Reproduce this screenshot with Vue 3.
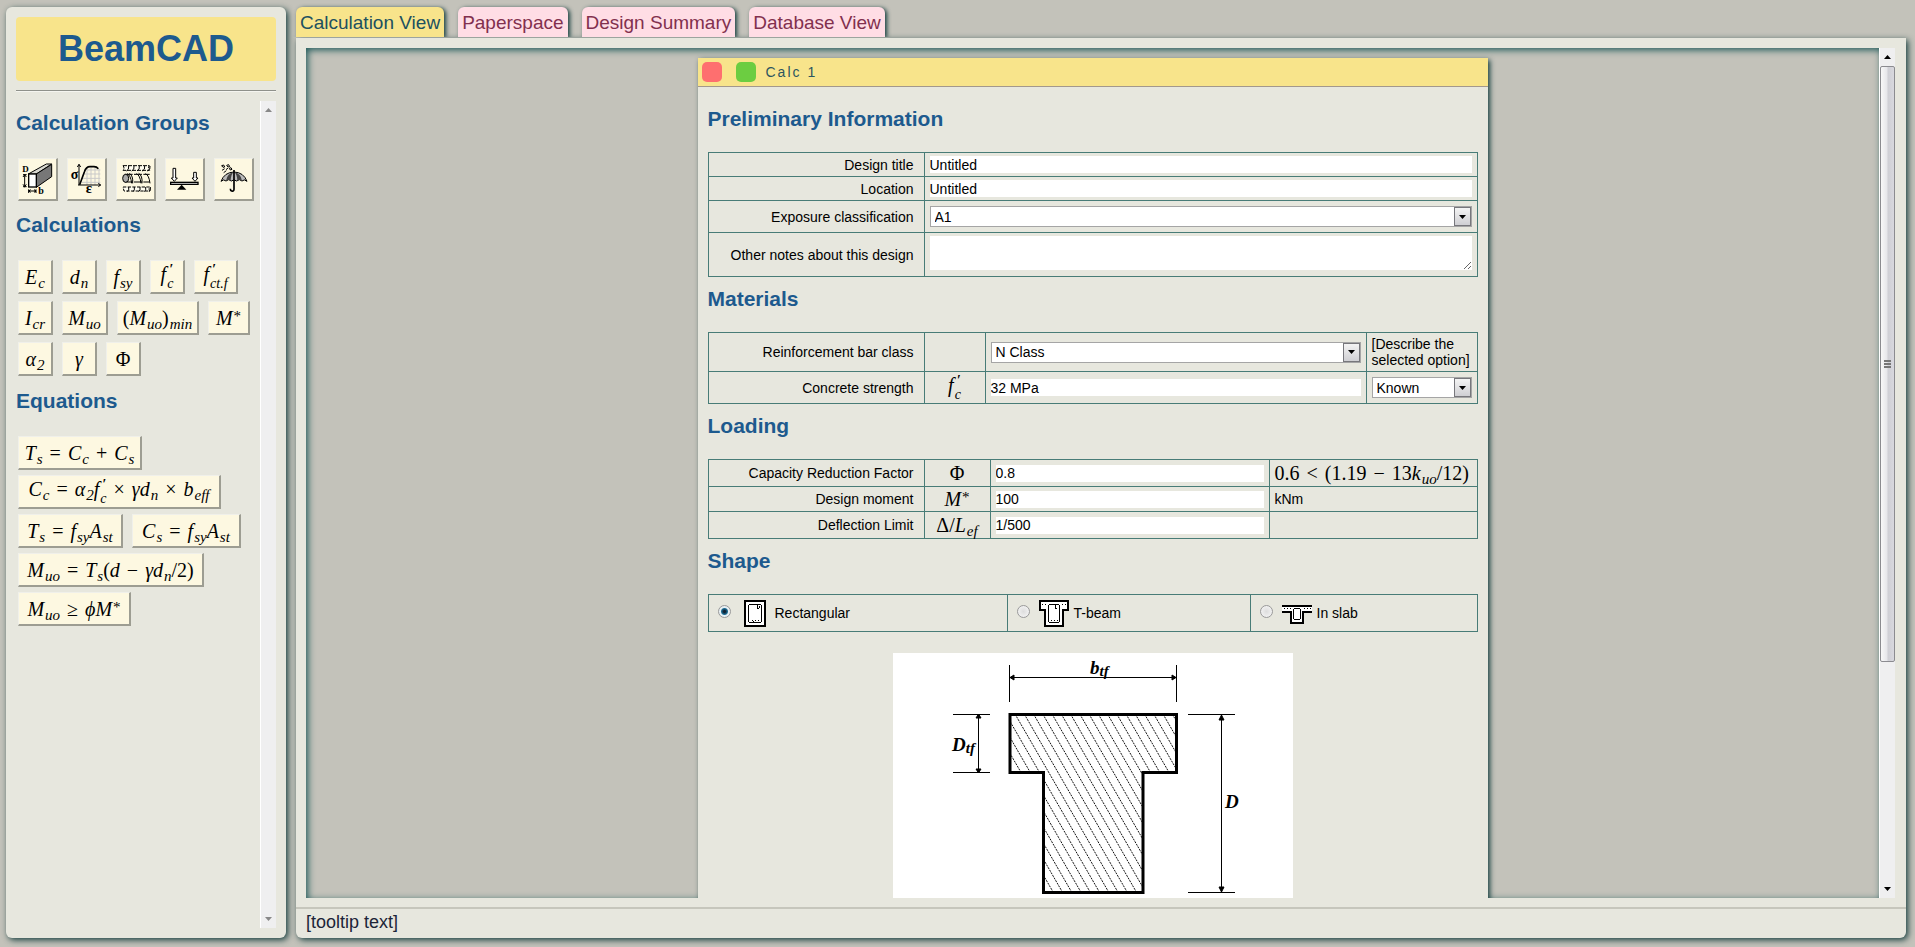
<script setup>
import { h, ref } from 'vue'

// Small formula renderer: letters are italic, _{} lowers, ^{} raises, |{a}{b} stacks.
const MathText = (props) => {
  const out = []
  const re = /\|\{([^}]*)\}\{([^}]*)\}|_\{([^}]*)\}|\^\{([^}]*)\}|\s([=+−×≥<])\s|([A-Za-zαγϕ]+)|([^A-Za-z_^|])/g
  for (const m of props.tex.matchAll(re)) {
    if (m[1] !== undefined) out.push(h('span', { class: 'm-stack' }, [h('span', m[1]), h('i', m[2])]))
    else if (m[3] !== undefined) out.push(h('sub', m[3]))
    else if (m[4] !== undefined) out.push(h('sup', m[4]))
    else if (m[5] !== undefined) out.push(h('span', { class: 'm-op' }, m[5]))
    else if (m[6] !== undefined) out.push(h('i', m[6]))
    else out.push(m[7])
  }
  return h('span', { class: 'm-text' }, out)
}
MathText.props = ['tex']

const groups = ['Section', 'Stress and strain', 'Reinforcement', 'Loads', 'Exposure']
const calculations = [
  { tex: 'E_{c}', w: 35 }, { tex: 'd_{n}', w: 35 }, { tex: 'f_{sy}', w: 35 },
  { tex: 'f|{′}{c}', w: 35 }, { tex: 'f|{′}{ct.f}', w: 44 },
  { tex: 'I_{cr}', w: 35 }, { tex: 'M_{uo}', w: 46 }, { tex: '(M_{uo})_{min}', w: 82 }, { tex: 'M^{*}', w: 42 },
  { tex: 'α_{2}', w: 35 }, { tex: 'γ', w: 35 }, { tex: 'Φ', w: 35 },
]
const equations = [
  { tex: 'T_{s} = C_{c} + C_{s}', w: 124 },
  { tex: 'C_{c} = α_{2}f|{′}{c} × γd_{n} × b_{eff}', w: 203 },
  { tex: 'T_{s} = f_{sy}A_{st}', w: 105 }, { tex: 'C_{s} = f_{sy}A_{st}', w: 109 },
  { tex: 'M_{uo} = T_{s}(d − γd_{n}/2)', w: 186 },
  { tex: 'M_{uo} ≥ ϕM^{*}', w: 113 },
]
const tabs = ['Calculation View', 'Paperspace', 'Design Summary', 'Database View']
const active = ref('Calculation View')
const shape = ref('rect')
const hatches = Array.from({ length: 31 }, (_, i) => 11 + i * 9.25)
</script>

<template>
  <div class="app">
    <aside class="sidebar">
      <h1>BeamCAD</h1>
      <hr>
      <div class="side-scroll">
        <div class="side-body">
          <h2>Calculation Groups</h2>
          <div class="btns">
            <button class="tool" :aria-label="groups[0]">
              <svg viewBox="60 478 108 117">
                <path d="M88 520 L142 490 H158 L112 520Z" fill="#d8d8d0" stroke="#000" stroke-width="3"/>
                <path d="M112 520 L158 491 V528 L112 560Z" fill="#777" stroke="#000" stroke-width="3"/>
                <rect x="89" y="520" width="23" height="39" fill="#fff" stroke="#000" stroke-width="4"/>
                <path d="M77 521V560M72 522H83M72 558H83M77 522l-5 7M77 522l5 7M77 558l-5-7M77 558l5-7M89 566v11M111 566v11M89 571H111M89 571l6-4M89 571l6 4M111 571l-6-4M111 571l-6 4" fill="none" stroke="#000" stroke-width="3"/>
                <text x="70" y="515" font-size="27" font-weight="bold">D</text>
                <text x="118" y="579" font-size="30" font-weight="bold">b</text>
              </svg>
            </button>
            <button class="tool" :aria-label="groups[1]">
              <svg viewBox="206 478 108 117">
                <path d="M254 520H303M248 533H303M248 545H303M263 508H303M263 500V553M275 500V553M287 500V553M299 505V553" stroke="#c9c9c9" stroke-width="3"/>
                <path d="M239 553V491M234 499l5-8 5 8M236 553H304M297 548l7 5-7 5" fill="none" stroke="#000" stroke-width="3"/>
                <path d="M241 552L255 514Q260 498 272 498H284Q292 498 297 504" fill="none" stroke="#000" stroke-width="5"/>
                <text x="214" y="536" font-size="42" font-weight="bold">σ</text>
                <text x="259" y="577" font-size="44" font-weight="bold">ε</text>
              </svg>
            </button>
            <button class="tool" :aria-label="groups[2]">
              <svg viewBox="353 478 108 117">
                <g fill="#fffdf0" stroke="#000" stroke-width="3">
                  <path d="M371 495H450Q445 502 451 509H371Q377 502 371 495Z" stroke-dasharray="12 3"/>
                  <path d="M381 511q9-4 7-15M397 511q9-4 7-15M413 511q9-4 7-15M429 511q9-4 7-15M445 511q9-4 7-15" fill="none"/>
                  <path d="M376 521H451M376 544H451" stroke-dasharray="24 4"/>
                  <ellipse cx="379" cy="533" rx="9" ry="12" fill="#aaa"/>
                  <path d="M383 519q11 4 14 29M390 518q12 7 10 30M411 519q11 4 14 29M418 518q12 7 10 30M438 519q11 4 14 29" fill="none"/>
                  <path d="M371 559H451Q447 565 452 571H374Z" stroke-dasharray="10 4"/>
                  <path d="M384 573q6-4 4-14M401 573q6-4 4-14M418 573q6-4 4-14M435 573q6-4 4-14M450 573q5-4 3-14" fill="none"/>
                </g>
              </svg>
            </button>
            <button class="tool" :aria-label="groups[3]">
              <svg viewBox="500 478 108 117">
                <path d="M521 503H529V532H534L525 542 516 532H521ZM583 515H591V532H596L587 542 578 532H583Z" fill="#fff" stroke="#000" stroke-width="3"/>
                <rect x="514" y="545" width="82" height="6" fill="#fff" stroke="#000" stroke-width="4"/>
                <path d="M547 552L561 567H533Z"/>
              </svg>
            </button>
            <button class="tool" :aria-label="groups[4]">
              <svg viewBox="647 478 108 117">
                <path d="M665 542Q675 515 704 514Q733 515 743 542Q735 534 728 541Q720 533 712 541Q704 534 696 541Q688 533 680 541Q673 534 665 542Z" fill="#bbb" stroke="#000" stroke-width="3"/>
                <path d="M680 540Q684 519 702 515Q695 522 694 540Q687 534 680 540ZM728 540Q724 519 706 515Q713 522 714 540Q721 534 728 540Z" fill="#444"/>
                <path d="M704 508V566Q704 573 697 571Q693 570 693 564" fill="none" stroke="#000" stroke-width="5"/>
                <path d="M667 495l6-2 3 6-5 1zM682 494l6-2 3 6-5 1zM690 503l5-2 3 5-5 2zM668 509l8-5M673 516l8-6M680 507l6-5" fill="none" stroke="#000" stroke-width="3"/>
              </svg>
            </button>
          </div>
          <h2>Calculations</h2>
          <div class="btns calcs">
            <button v-for="c in calculations" :key="c.tex" :style="{ width: c.w + 'px' }"><MathText :tex="c.tex" /></button>
          </div>
          <h2>Equations</h2>
          <div class="btns eqs">
            <button v-for="c in equations" :key="c.tex" :style="{ width: c.w + 'px' }"><MathText :tex="c.tex" /></button>
          </div>
        </div>
        <div class="bar idle">
          <svg class="tri" viewBox="0 0 7 4"><path d="M0 4L3.500 0 7 4Z" /></svg>
          <svg class="tri" viewBox="0 0 7 4"><path d="M0 0L3.500 4 7 0Z" /></svg>
        </div>
      </div>
    </aside>

    <main class="main">
      <nav class="tabs">
        <button v-for="t in tabs" :key="t" :class="{ on: t === active }" @click="active = t">{{ t }}</button>
      </nav>
      <section class="panel">
        <div class="view">
          <div class="workspace">
            <article class="window">
              <header>
                <button class="dot red" aria-label="Close"></button>
                <button class="dot green" aria-label="Expand"></button>
                <span>Calc 1</span>
              </header>
              <div class="content">
                <h2>Preliminary Information</h2>
                <table>
                  <tbody>
                    <tr class="r24"><th><label for="title">Design title</label></th><td><input id="title" type="text" value="Untitled"></td></tr>
                    <tr class="r24"><th><label for="loc">Location</label></th><td><input id="loc" type="text" value="Untitled"></td></tr>
                    <tr class="r32"><th><label for="expo">Exposure classification</label></th><td>
                      <div class="pick"><select id="expo"><option>A1</option></select><span class="arrow"><svg viewBox="0 0 7 4"><path d="M0 0H7L3.500 4Z" /></svg></span></div>
                    </td></tr>
                    <tr class="r44"><th><label for="notes">Other notes about this design</label></th><td class="top"><textarea id="notes"></textarea></td></tr>
                  </tbody>
                </table>

                <h2>Materials</h2>
                <table>
                  <tbody>
                    <tr class="r39"><th><label for="bar">Reinforcement bar class</label></th><td class="sym61"></td><td>
                      <div class="pick"><select id="bar"><option>N Class</option></select><span class="arrow"><svg viewBox="0 0 7 4"><path d="M0 0H7L3.500 4Z" /></svg></span></div>
                    </td><td class="c111">[Describe the<br>selected option]</td></tr>
                    <tr class="r32"><th><label for="fc">Concrete strength</label></th><td class="sym61"><MathText tex="f|{′}{c}" /></td><td><input id="fc" type="text" value="32 MPa"></td><td class="c111">
                      <div class="pick"><select aria-label="Concrete strength status"><option>Known</option></select><span class="arrow"><svg viewBox="0 0 7 4"><path d="M0 0H7L3.500 4Z" /></svg></span></div>
                    </td></tr>
                  </tbody>
                </table>

                <h2>Loading</h2>
                <table>
                  <tbody>
                    <tr class="r27"><th><label for="phi">Capacity Reduction Factor</label></th><td class="sym66"><MathText tex="Φ" /></td><td><input id="phi" type="text" value="0.8"></td><td class="c208"><MathText tex="0.6 < (1.19 − 13k_{uo}/12)" /></td></tr>
                    <tr class="r25"><th><label for="moment">Design moment</label></th><td class="sym66"><MathText tex="M^{*}" /></td><td><input id="moment" type="text" value="100"></td><td class="c208">kNm</td></tr>
                    <tr class="r27"><th><label for="defl">Deflection Limit</label></th><td class="sym66"><MathText tex="Δ/L_{ef}" /></td><td><input id="defl" type="text" value="1/500"></td><td class="c208"></td></tr>
                  </tbody>
                </table>

                <h2>Shape</h2>
                <table>
                  <tbody>
                    <tr class="r37">
                      <td class="s1"><label class="shape"><input v-model="shape" type="radio" name="shape" value="rect">
                        <svg class="wide" viewBox="0 0 30 27" shape-rendering="crispEdges"><rect x="5" y="1" width="20" height="25" fill="#fff" stroke="#000" stroke-width="2"/><rect x="8.500" y="4.500" width="13" height="18" rx="2" fill="none" stroke="#000"/><path d="M17.500 5v3M17 8.500h2M19.500 8v-2M12 20.500h1M15 20.500h1M18 20.500h1M13 21.500h1" stroke="#000" fill="none"/></svg>
                        <span class="far">Rectangular</span></label></td>
                      <td class="s2"><label class="shape"><input v-model="shape" type="radio" name="shape" value="tee">
                        <svg class="wide" viewBox="0 0 30 27" shape-rendering="crispEdges"><path d="M1 1H29V10H24V26H6V10H1Z" fill="#fff" stroke="#000" stroke-width="2"/><rect x="9.500" y="4.500" width="11" height="18" rx="2" fill="none" stroke="#000"/><path d="M3 4.500h1M6 4.500h1M23 4.500h1M26 4.500h1M16.500 5v3M16 8.500h2M12 20.500h1M15 20.500h1M18 20.500h1" stroke="#000" fill="none"/></svg>
                        <span>T-beam</span></label></td>
                      <td class="s3"><label class="shape"><input v-model="shape" type="radio" name="shape" value="slab">
                        <svg class="wide" viewBox="0 0 30 27" shape-rendering="crispEdges"><path d="M0 6H30V12H22V23H9V12H0Z" fill="#fff"/><path d="M0 6H30M0 12H9V23H21V12H30" fill="none" stroke="#000" stroke-width="2"/><rect x="11.500" y="8.500" width="7" height="11" rx="2" fill="none" stroke="#000"/><path d="M2 8.500h1M5 8.500h1M8 8.500h1M22 8.500h1M25 8.500h1M28 8.500h1" stroke="#000"/></svg>
                        <span>In slab</span></label></td>
                    </tr>
                  </tbody>
                </table>

                <svg class="diagram" viewBox="0 0 400 250" role="img" aria-label="T-beam dimensions">
                  <defs><clipPath id="tee"><path d="M117 61H283V119H249V239H151V119H117Z" /></clipPath></defs>
                  <rect width="400" height="250" fill="#fff" />
                  <g clip-path="url(#tee)" stroke="#111" stroke-width="1" stroke-dasharray="2 1">
                    <line v-for="x in hatches" :key="x" :x1="x" y1="61" :x2="x + 104" y2="241" />
                  </g>
                  <path d="M117 61.500H283.500V119.500H250V239.500H150.500V119.500H117Z" fill="none" stroke="#000" stroke-width="3" />
                  <path d="M116.500 12V49M283.500 12V49M116.500 24.500H283.500M60 61.500H97M60 119.500H97M85.500 61.500V119.500M295 61.500H342M295 239.500H342M328.500 61.500V239.500" stroke="#000" fill="none" />
                  <path d="M117 24.500l4-2.500v5ZM283 24.500l-4-2.500v5ZM85.500 61l-2.500 4h5ZM85.500 120l-2.500-4h5ZM328.500 62l-2.500 5h5ZM328.500 239l-2.500-5h5Z" stroke="#000" />
                  <g font-family="Liberation Serif, serif" font-style="italic" font-weight="bold" font-size="19">
                    <text x="197" y="21">b<tspan font-size="15" dy="2">tf</tspan></text>
                    <text x="59" y="98">D<tspan font-size="15" dy="2">tf</tspan></text>
                    <text x="332" y="155">D</text>
                  </g>
                </svg>
              </div>
            </article>
          </div>
          <div class="bar live">
            <svg class="tri" viewBox="0 0 7 4"><path d="M0 4L3.500 0 7 4Z" /></svg>
            <div class="thumb"><i></i><i></i><i></i></div>
            <div class="rest"></div>
            <svg class="tri" viewBox="0 0 7 4"><path d="M0 0L3.500 4 7 0Z" /></svg>
          </div>
        </div>
        <footer>[tooltip text]</footer>
      </section>
    </main>
  </div>
</template>

<style>
body { background: #c3c2ba; margin: 0; }
.m-text { font: 20px/22px "Liberation Serif", serif; color: #000; white-space: nowrap; }
.m-text sub, .m-text sup { font-size: 15px; line-height: 0; margin-left: 1px; }
.m-text sub { font-style: italic; vertical-align: -4px; }
.m-text sup { vertical-align: 4px; }
.m-text .m-op { margin: 0 7px; }
.m-text .m-stack { display: inline-flex; flex-direction: column; vertical-align: middle; font-size: 14px; line-height: 13px; margin-left: 1px; text-align: left; }
.m-text .m-stack span { font-size: 14px; line-height: 11px; font-style: italic; font-weight: bold; margin: 0 0 2px 2px; }
</style>

<style scoped>
* { box-sizing: border-box; }
.app { display: flex; gap: 10px; height: 100vh; padding: 7px 9px 9px 6px; font: 14px/16px "Liberation Sans", Arial, sans-serif; color: #000; overflow: hidden; }
button { font: inherit; border: 0; padding: 0; cursor: pointer; }
h1, h2, hr { margin: 0; }
.sidebar { flex: none; width: 280px; display: flex; flex-direction: column; padding: 10px; background: #e7e7de; border-radius: 6px; box-shadow: 2px 2px 6px #173f3f; }
h1 { height: 64px; border-radius: 4px; background: #f8e48b; color: #1d5a8e; font-size: 36px; line-height: 64px; text-align: center; }
hr { margin-top: 9px; border: 0; border-top: 1px solid #8f918b; border-bottom: 1px solid #f5f5f0; }
.side-scroll { flex: 1; display: flex; margin-top: 9px; min-height: 0; }
.side-body { flex: 1; min-width: 0; padding-top: 10px; }
h2 { color: #1d5a8e; font-size: 21px; line-height: 24px; }
.side-body h2 { margin-bottom: 23px; }
.btns { display: flex; flex-wrap: wrap; gap: 7px 9px; margin: 0 -8px 13px 2px; }
.btns.eqs { gap: 5px 9px; }
.btns button { height: 34px; background: #fdf8e1; border: solid; border-width: 1px 2px 2px 1px; border-color: #f0f0ea #9d9d92 #9d9d92 #f0f0ea; }
.btns .tool { width: 40px; height: 43px; margin-bottom: -1px; }
.tool svg { display: block; width: 36px; height: 39px; font-family: "Liberation Serif", serif; }
.bar { flex: none; display: flex; flex-direction: column; align-items: center; background: #efeff0; border-left: 1px solid #fff; }
.bar.idle { width: 16px; justify-content: space-between; padding: 7px 0; }
.tri { width: 7px; height: 4px; flex: none; }
.idle .tri { fill: #888; }
.bar.live { width: 16px; padding: 7px 0; gap: 7px; }
.thumb { flex: 595; width: 15px; display: flex; flex-direction: column; justify-content: center; align-items: center; gap: 1px; border: 1px solid #8b8b90; border-radius: 2px; background: linear-gradient(90deg, #f8f8f8 0, #e6e6ea 48%, #cfcfd5 52%, #d8d8de); }
.thumb i { width: 7px; height: 2px; background: #777; }
.rest { flex: 212; }

.main { flex: 1; min-width: 0; display: flex; flex-direction: column; }
.tabs { display: flex; gap: 14px; height: 31px; flex: none; }
.tabs button { height: 30px; padding: 0 4px; border-radius: 6px 6px 0 0; background: #ffdde5; color: #82304e; font-size: 19px; line-height: 32px; box-shadow: 2px 1px 4px #173f3f; white-space: nowrap; clip-path: inset(-6px -8px 0 -6px); }
.tabs .on { background: #f8e48b; color: #205060; }
.panel { flex: 1; min-height: 0; display: flex; flex-direction: column; background: #e7e7de; border-radius: 0 0 6px 6px; box-shadow: 2px 2px 6px #173f3f; }
.view { flex: 1; min-height: 0; display: flex; padding: 10px 11px 9px 10px; }
.workspace { flex: 1; min-width: 0; overflow: hidden; padding-top: 10px; background: #c3c2ba; box-shadow: inset 2px 2px 7px #1f5a5a; }
footer { flex: none; height: 31px; padding: 0 10px; border-top: 2px solid #c6c6bc; font-size: 18px; line-height: 26px; color: #1c2438; }
.window { width: 100%; max-width: 790px; margin: 0 auto; background: #e7e7de; box-shadow: 2px 2px 5px #173f3f; }
header { display: flex; align-items: center; height: 29px; padding-left: 4px; background: #f8e48b; border-bottom: 1px solid #a3988c; color: #2c5560; letter-spacing: 2px; }
.dot { width: 20px; height: 20px; border-radius: 5px; margin-right: 14px; }
.red { background: #fe6f6f; }
.green { background: #6ccd41; margin-right: 10px; }
.content { padding: 20px 10px 0; }
.content h2 { margin: 10px 0 21px; }
.content h2:first-child { margin-top: 0; }
table { width: 100%; table-layout: auto; border-collapse: collapse; }
th, td { border: 1px solid #487c77; padding: 0 5px; vertical-align: middle; text-align: left; }
th { width: 216px; padding-right: 10px; text-align: right; font-weight: normal; white-space: nowrap; }
.top { vertical-align: top; padding-top: 3px; }
.r24 { height: 24px; } .r25 { height: 25px; } .r27 { height: 27px; } .r32 { height: 32px; }
.r37 { height: 37px; } .r39 { height: 39px; } .r44 { height: 44px; }
.sym61 { width: 61px; text-align: center; }
.sym66 { width: 66px; padding: 0; text-align: center; }
.c111 { width: 111px; white-space: nowrap; }
.c208 { width: 208px; white-space: nowrap; }
.s1 { width: 299px; } .s2 { width: 243px; }
input[type="text"], textarea, select { display: block; width: 100%; margin: 0; border: 0; padding: 0; background: #fff; color: #000; font: inherit; }
input[type="text"] { height: 17px; }
textarea { height: 34px; resize: vertical; }
.pick { position: relative; }
select { appearance: none; height: 21px; padding: 0 22px 0 4px; border: 1px solid #a5a5a5; border-radius: 0; }
.arrow { position: absolute; top: 1px; right: 1px; width: 17px; height: 19px; display: grid; place-items: center; border: 1px solid #77777c; background: linear-gradient(#f4f4f4, #cfcfd3); pointer-events: none; }
.arrow svg { width: 7px; height: 4px; }
.shape { display: flex; align-items: center; padding-left: 4px; }
.shape input { appearance: none; flex: none; width: 13px; height: 13px; margin: 0 9px 3px 0; border: 1px solid #999; border-radius: 50%; background: radial-gradient(#ddd, #f8f8f8); }
.shape input:checked { background: radial-gradient(#123 0 1px, #1d6e96 3px, #e8f0f4 4px); }
.shape svg { width: 30px; height: 27px; flex: none; margin-right: 5px; }
.diagram { display: block; width: 400px; height: 250px; margin: 21px auto 0; }
</style>
